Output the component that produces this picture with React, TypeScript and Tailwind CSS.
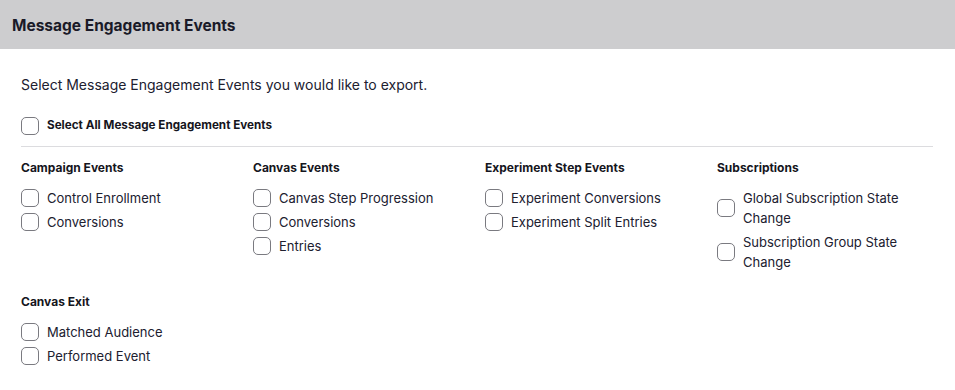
import React from "react";

type Group = { title: string; items: string[] };

const groups: Group[] = [
  { title: "Campaign Events", items: ["Control Enrollment", "Conversions"] },
  { title: "Canvas Events", items: ["Canvas Step Progression", "Conversions", "Entries"] },
  { title: "Experiment Step Events", items: ["Experiment Conversions", "Experiment Split Entries"] },
  { title: "Subscriptions", items: ["Global Subscription State Change", "Subscription Group State Change"] },
  { title: "Canvas Exit", items: ["Matched Audience", "Performed Event"] },
];

function Box() {
  return <span className="shrink-0 w-[18px] h-[18px] rounded-[5px] border border-[#7a7a80] bg-white" />;
}

function Item({ label }: { label: string }) {
  return (
    <label className="flex items-center gap-[8px] py-[2px]">
      <Box />
      <span className="text-[13px] leading-[20px] text-[#20202f] max-w-[180px]">{label}</span>
    </label>
  );
}

function Column({ group }: { group: Group }) {
  return (
    <div>
      <h3 className="text-[12px] font-bold leading-[16px] text-[#151520]">{group.title}</h3>
      <div className="mt-[10px] flex flex-col">
        {group.items.map((it) => (
          <Item key={it} label={it} />
        ))}
      </div>
    </div>
  );
}

export default function App() {
  return (
    <div className="w-[955px] h-[390px] bg-white overflow-hidden" style={{ fontFamily: "Inter, 'Noto Sans', sans-serif" }}>
      <div className="h-[49px] bg-[#cdcdcf] flex items-center px-[12px] pt-[2px]">
        <h2 className="text-[15.5px] font-bold text-[#1a1a28]">Message Engagement Events</h2>
      </div>
      <div className="pl-[21px] pr-[22px]">
        <p className="mt-[26px] text-[14px] leading-[20px] text-[#20202f]">
          Select Message Engagement Events you would like to export.
        </p>
        <label className="mt-[22px] flex items-center gap-[8px]">
          <Box />
          <span className="text-[11.7px] font-bold text-[#151520]">Select All Message Engagement Events</span>
        </label>
        <div className="mt-[11px] border-t border-[#dcdcdf]" />
        <div className="mt-[13px] grid grid-cols-4 gap-y-[20px] w-[928px]">
          {groups.map((g) => (
            <Column key={g.title} group={g} />
          ))}
        </div>
      </div>
    </div>
  );
}
